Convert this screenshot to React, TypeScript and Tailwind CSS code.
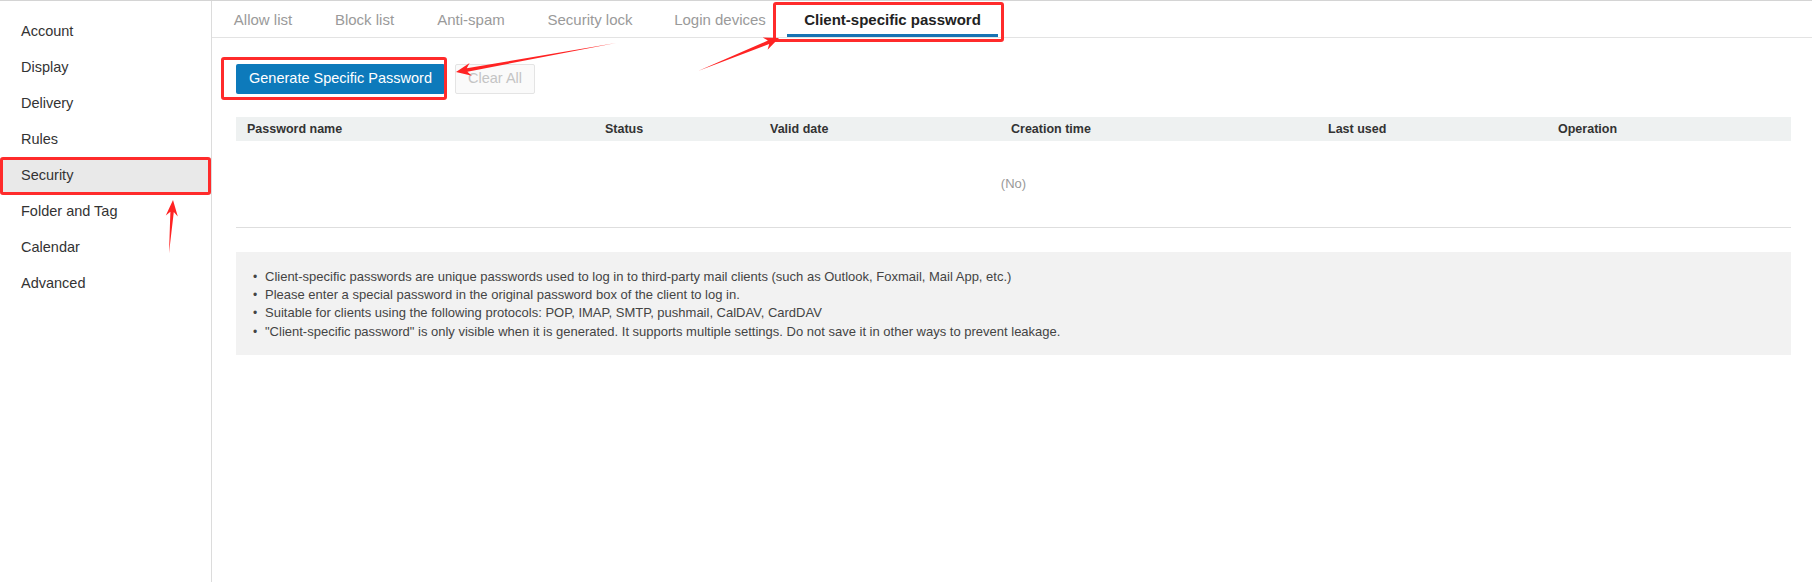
import React from 'react';

const menu = ['Account', 'Display', 'Delivery', 'Rules', 'Security', 'Folder and Tag', 'Calendar', 'Advanced'];

const tabs = [
  { label: 'Allow list', w: 'w-[102px]' },
  { label: 'Block list', w: 'w-[101px]' },
  { label: 'Anti-spam', w: 'w-[112px]' },
  { label: 'Security lock', w: 'w-[126px]' },
  { label: 'Login devices', w: 'w-[134px]' },
  { label: 'Client-specific password', w: 'w-[211px]', active: true },
];

const columns = ['Password name', 'Status', 'Valid date', 'Creation time', 'Last used', 'Operation'];

const notes = [
  'Client-specific passwords are unique passwords used to log in to third-party mail clients (such as Outlook, Foxmail, Mail App, etc.)',
  'Please enter a special password in the original password box of the client to log in.',
  'Suitable for clients using the following protocols: POP, IMAP, SMTP, pushmail, CalDAV, CardDAV',
  '"Client-specific password" is only visible when it is generated. It supports multiple settings. Do not save it in other ways to prevent leakage.',
];

// tapered annotation arrow, thin at the tail and barbed at the tip
const arrow = (x1: number, y1: number, x2: number, y2: number, shaft = 3.5, headW = 13, headL = 15) => {
  const len = Math.hypot(x2 - x1, y2 - y1);
  const dx = (x2 - x1) / len;
  const dy = (y2 - y1) / len;
  const nx = -dy;
  const ny = dx;
  const notch = { x: x2 - dx * headL * 0.75, y: y2 - dy * headL * 0.75 };
  const barb = { x: x2 - dx * headL, y: y2 - dy * headL };
  const pts = [
    [x1, y1],
    [notch.x + nx * shaft / 2, notch.y + ny * shaft / 2],
    [barb.x + nx * headW / 2, barb.y + ny * headW / 2],
    [x2, y2],
    [barb.x - nx * headW / 2, barb.y - ny * headW / 2],
    [notch.x - nx * shaft / 2, notch.y - ny * shaft / 2],
  ];
  return pts.map((p) => `${p[0].toFixed(1)},${p[1].toFixed(1)}`).join(' ');
};

export default function App() {
  return (
    <div className="relative w-[1812px] h-[582px] bg-white border-t border-[#d4d4d4] flex font-['Liberation_Sans',Arial,sans-serif] overflow-hidden">
      <aside className="w-[212px] shrink-0 border-r border-[#dcdcdc] pt-[13px]">
        {menu.map((item) => (
          <div
            key={item}
            className={`h-[36px] flex items-center pl-[21px] text-[14.5px] text-[#333] ${item === 'Security' ? 'bg-[#e9e9e9]' : ''}`}
          >
            {item}
          </div>
        ))}
      </aside>

      <main className="flex-1 min-w-0">
        <div className="flex h-[37px] border-b border-[#e3e3e3]">
          {tabs.map((t) => (
            <div
              key={t.label}
              className={`${t.w} h-[36px] pt-[9px] text-center text-[15px] leading-[20px] border-b-[3px] ${
                t.active ? 'border-[#1773b3] text-[#222] font-bold text-[14.5px]' : 'border-transparent text-[#9a9a9a]'
              }`}
            >
              {t.label}
            </div>
          ))}
        </div>

        <div className="pl-[24px] pr-[21px]">
          <div className="mt-[26px] flex gap-[10px]">
            <button className="w-[209px] h-[30px] bg-[#0d7abb] text-white text-[14.5px] rounded-[2px]">
              Generate Specific Password
            </button>
            <button className="w-[80px] h-[30px] border border-[#e4e4e4] bg-[#fafafa] text-[#c4c4c4] text-[14.5px] rounded-[2px]">
              Clear All
            </button>
          </div>

          <div className="mt-[23px] h-[24px] bg-[#eef1f1] grid grid-cols-[358px_165px_241px_317px_230px_1fr] items-center">
            {columns.map((c) => (
              <div key={c} className="pl-[11px] text-[12.5px] font-bold text-[#333]">
                {c}
              </div>
            ))}
          </div>
          <div className="h-[87px] flex items-center justify-center border-b border-[#dedede] text-[13px] text-[#999]">
            (No)
          </div>

          <div className="mt-[24px] bg-[#f2f2f2] pl-[17px] pt-[16px] pb-[14px] text-[13px] leading-[18.2px] text-[#444]">
            {notes.map((n) => (
              <div key={n} className="flex">
                <span className="w-[12px] shrink-0 text-[12px]">•</span>
                <span>{n}</span>
              </div>
            ))}
          </div>
        </div>
      </main>

      {/* annotation overlays */}
      <div className="absolute left-0 top-[156px] w-[211px] h-[38px] border-[3px] border-[#ff2b2b] rounded-[3px]" />
      <div className="absolute left-[221px] top-[56px] w-[226px] h-[43px] border-[3px] border-[#ff2b2b] rounded-[3px]" />
      <div className="absolute left-[773px] top-[1px] w-[231px] h-[40px] border-[3px] border-[#ff2b2b] rounded-[3px]" />
      <svg className="absolute inset-0 pointer-events-none" width="1812" height="582">
        <polygon points={arrow(616, 42, 456, 71)} fill="#ff2323" />
        <polygon points={arrow(698, 70, 779, 37)} fill="#ff2323" />
        <polygon points={arrow(169, 252, 173, 199, 3.5, 12, 16)} fill="#ff2323" />
      </svg>
    </div>
  );
}
